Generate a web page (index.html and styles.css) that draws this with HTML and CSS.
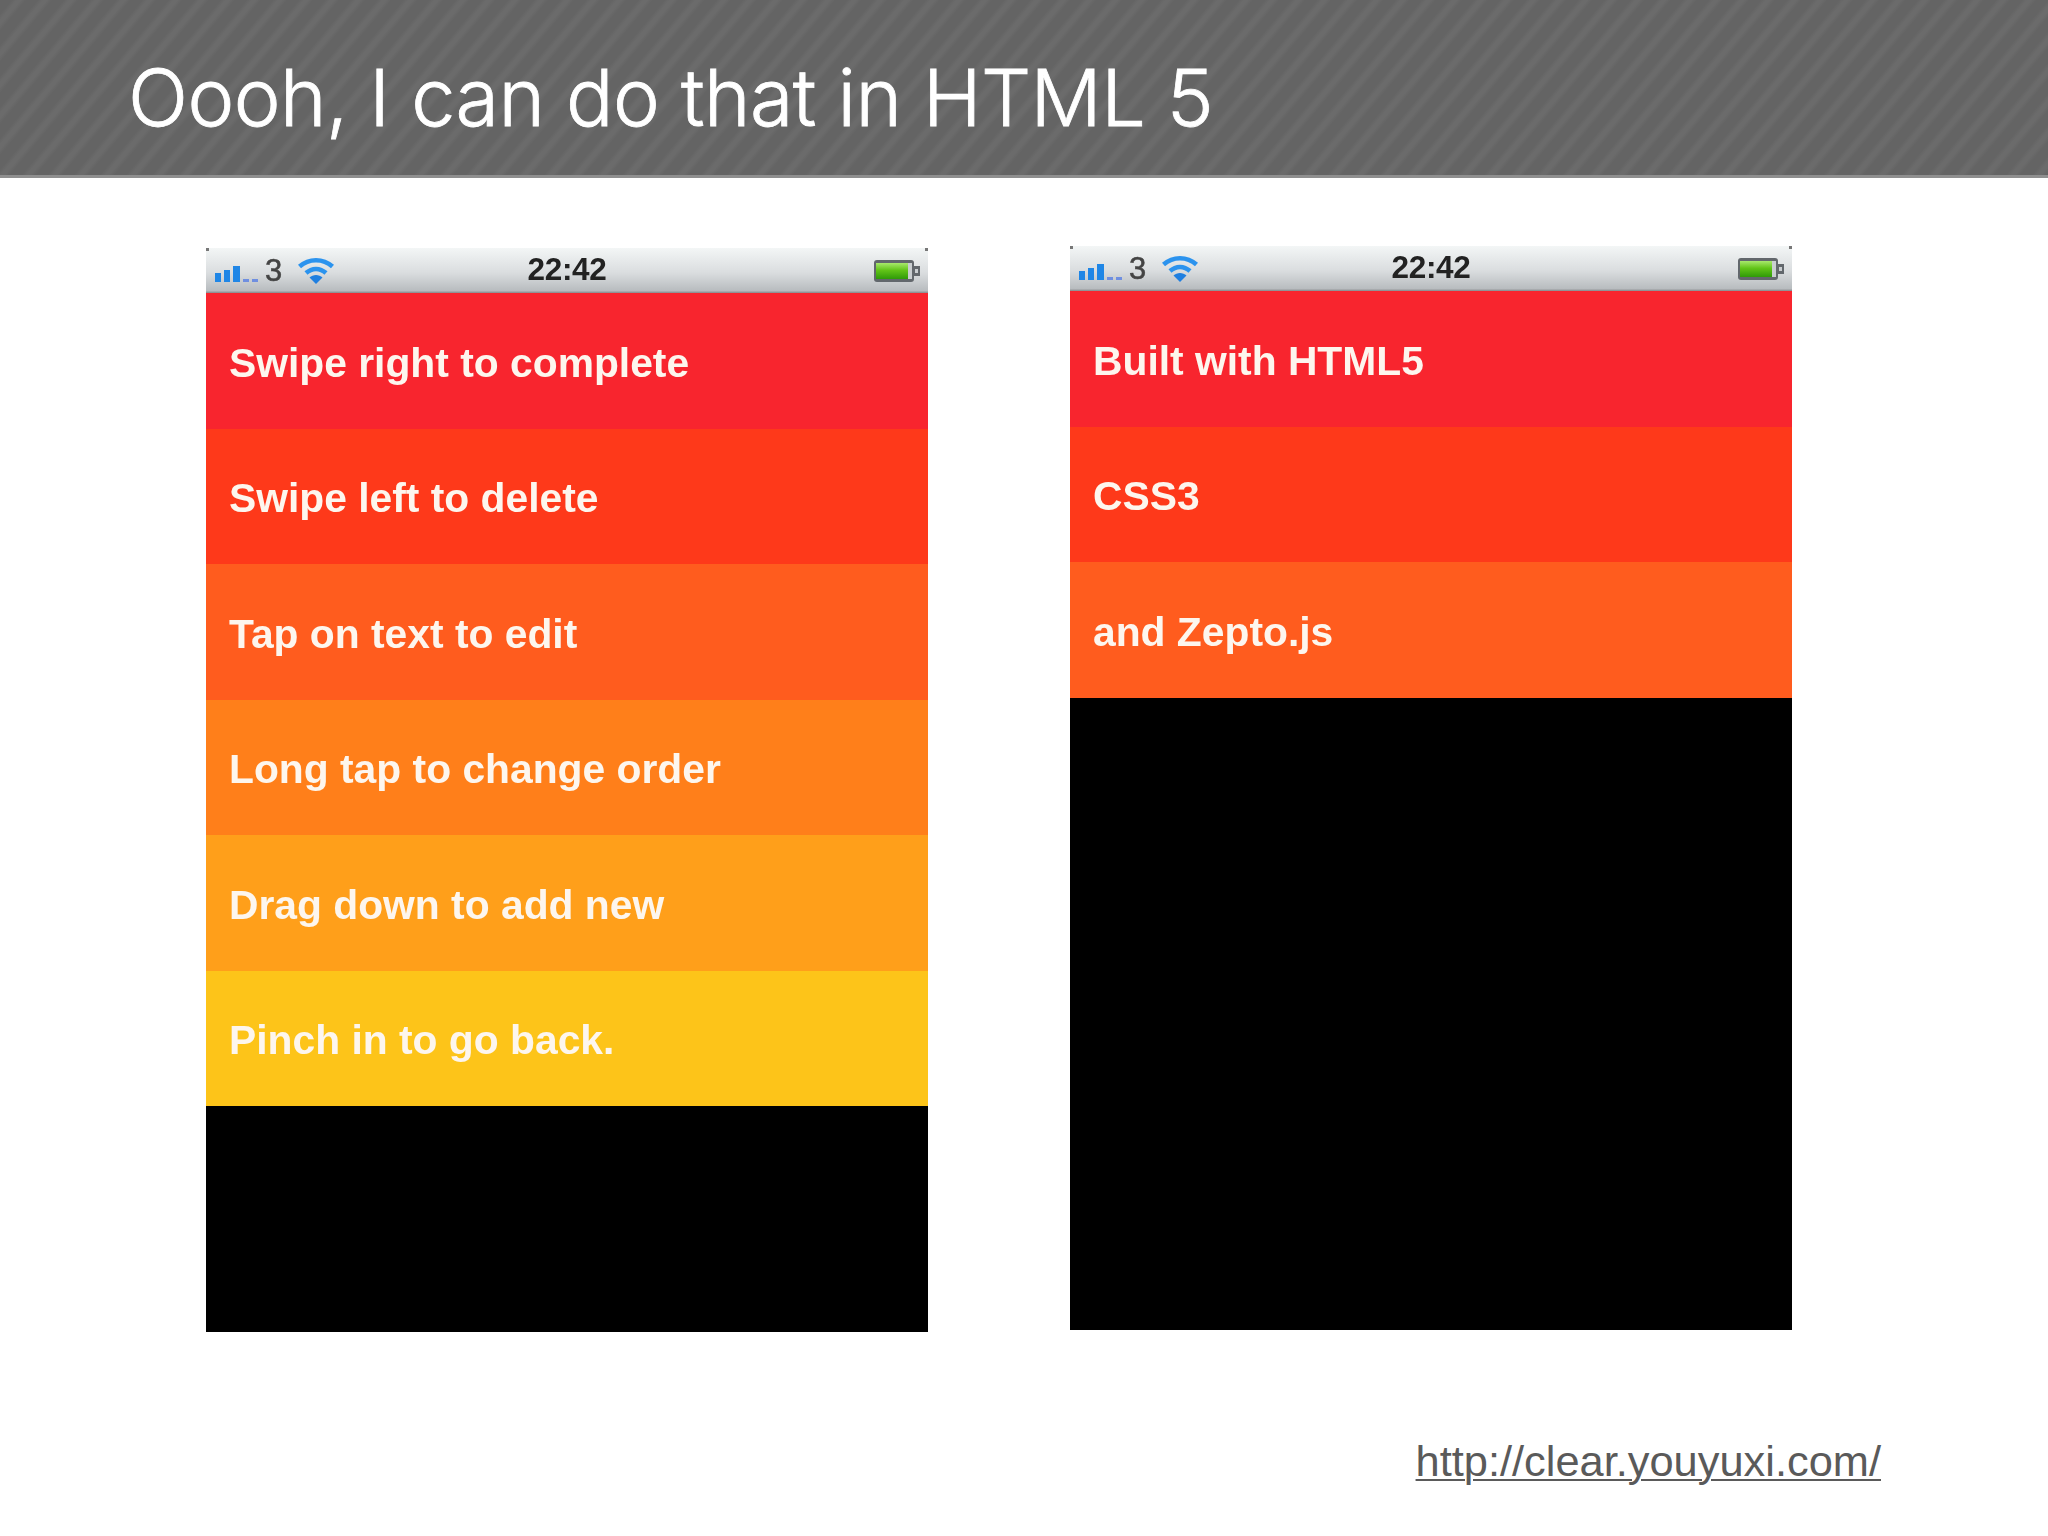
FILE: index.html
```html
<!DOCTYPE html>
<html lang="en">
<head>
<meta charset="utf-8">
<title>Oooh, I can do that in HTML 5</title>
<link rel="stylesheet" href="styles.css">
</head>
<body>
<svg class="defs" width="0" height="0" aria-hidden="true">
  <defs>
    <symbol id="signal" viewBox="0 0 44 18">
      <rect x="0" y="8" width="6" height="9" fill="#1f86e6"/>
      <rect x="9" y="5" width="6" height="12" fill="#1f86e6"/>
      <rect x="18" y="1" width="7" height="16" fill="#1f86e6"/>
      <rect x="28" y="14" width="6" height="3" fill="#6f8fe0"/>
      <rect x="37" y="14" width="6" height="3" fill="#6f8fe0"/>
    </symbol>
    <symbol id="wifi" viewBox="0 0 36 28">
      <path d="M1.5 9.5C11 1 25 1 34.5 9.500" fill="none" stroke="#2b93ee" stroke-width="4.500"/>
      <path d="M8 16C14 10.500 22 10.500 28 16" fill="none" stroke="#2b93ee" stroke-width="4.500"/>
      <path d="M18 27L11.500 20.500C15 17 21 17 24.500 20.500Z" fill="#1f7fe0"/>
    </symbol>
    <linearGradient id="charge" x1="0" y1="0" x2="0" y2="1">
      <stop offset="0" stop-color="#a8e86c"/>
      <stop offset="0.45" stop-color="#62c418"/>
      <stop offset="1" stop-color="#2f9a08"/>
    </linearGradient>
    <symbol id="battery" viewBox="0 0 48 24">
      <rect x="1" y="1" width="40" height="22" rx="3" fill="#62676c"/>
      <rect x="3" y="4" width="32" height="16" fill="url(#charge)"/>
      <rect x="35" y="4" width="4" height="16" fill="#c9cdd0"/>
      <rect x="41" y="7" width="6" height="10" fill="#62676c"/>
      <rect x="42" y="10" width="3" height="4" fill="#c9cdd0"/>
    </symbol>
  </defs>
</svg>

<header class="title-bar">
  <h1 class="title">Oooh, I can do that in HTML 5</h1>
</header>

<main class="phones">
  <section class="phone phone-low">
    <div class="status">
      <div class="status-left">
        <svg class="icon-signal"><use href="#signal"/></svg>
        <span class="carrier">3</span>
        <svg class="icon-wifi"><use href="#wifi"/></svg>
      </div>
      <div class="clock">22:42</div>
      <div class="status-right"><svg class="icon-battery"><use href="#battery"/></svg></div>
    </div>
    <ul class="list">
      <li class="item c1">Swipe right to complete</li>
      <li class="item c2">Swipe left to delete</li>
      <li class="item c3">Tap on text to edit</li>
      <li class="item c4">Long tap to change order</li>
      <li class="item c5">Drag down to add new</li>
      <li class="item c6">Pinch in to go back.</li>
    </ul>
  </section>

  <section class="phone">
    <div class="status">
      <div class="status-left">
        <svg class="icon-signal"><use href="#signal"/></svg>
        <span class="carrier">3</span>
        <svg class="icon-wifi"><use href="#wifi"/></svg>
      </div>
      <div class="clock">22:42</div>
      <div class="status-right"><svg class="icon-battery"><use href="#battery"/></svg></div>
    </div>
    <ul class="list">
      <li class="item c1">Built with HTML5</li>
      <li class="item c2">CSS3</li>
      <li class="item c3">and Zepto.js</li>
    </ul>
  </section>
</main>

<footer class="source">
  <a class="source-link" href="#">http://clear.youyuxi.com/</a>
</footer>
</body>
</html>
```

FILE: styles.css
```css
* { box-sizing: border-box; }

html, body {
  margin: 0;
  padding: 0;
  background: #fff;
}

body {
  width: 2048px;
  height: 1536px;
  overflow: hidden;
  font-family: "Liberation Sans", Arial, sans-serif;
}

.defs { position: absolute; }

.title-bar {
  height: 178px;
  padding: 20px 0 0 128px;
  display: flex;
  align-items: center;
  border-bottom: 3px solid #8f8f8f;
  background-color: #666;
  background-image: repeating-linear-gradient(130deg, #646464 0, #646464 9px, #6b6b6b 13px, #6b6b6b 16px, #646464 20px);
}

.title {
  margin: 0;
  font-family: Inter, "Liberation Sans", sans-serif;
  font-weight: 300;
  font-size: 79px;
  letter-spacing: -0.55px;
  -webkit-text-stroke: 0.8px #fff;
  line-height: 1;
  color: #fff;
  white-space: nowrap;
}

.phones {
  display: flex;
  align-items: flex-start;
  gap: 142px;
  padding: 68px 0 0 206px;
}

.phone {
  width: 722px;
  height: 1084px;
  background: #000;
}

.phone-low { margin-top: 2px; }

.status {
  position: relative;
  height: 45px;
  padding: 0 7px 0 9px;
  display: grid;
  grid-template-columns: 1fr auto 1fr;
  align-items: center;
  background: linear-gradient(#f3f6f6, #dadddf 55%, #b8bcbf 95%, #85888a);
  filter: blur(0.5px);
}

.status::before,
.status::after {
  content: "";
  position: absolute;
  top: 0;
  width: 3px;
  height: 3px;
  background: #777;
}
.status::before { left: 0; }
.status::after { right: 0; }

.status-left {
  display: flex;
  align-items: center;
}

.icon-signal {
  width: 44px;
  height: 18px;
  margin-top: 6px;
}

.carrier {
  margin-left: 6px;
  font-size: 31px;
  line-height: 1;
  color: #444;
  -webkit-text-stroke: 0.5px #444;
}

.icon-wifi {
  width: 36px;
  height: 28px;
  margin-left: 16px;
}

.clock {
  font-weight: 700;
  font-size: 31.5px;
  letter-spacing: -0.3px;
  line-height: 1;
  color: #222;
  transform: translate(-1px, -1px);
}

.status-right {
  display: flex;
  justify-content: flex-end;
}

.icon-battery {
  width: 48px;
  height: 24px;
}

.list {
  margin: 0;
  padding: 0;
  list-style: none;
}

.item {
  height: 135.5px;
  padding: 5px 0 0 23px;
  display: flex;
  align-items: center;
  font-weight: 700;
  font-size: 40.8px;
  color: #fdf6ee;
  filter: blur(0.6px);
}

.c1 { background: #f8252e; }
.c2 { background: #fe391a; }
.c3 { background: #ff5c1e; }
.c4 { background: #ff7f1a; }
.c5 { background: #ff9f1a; }
.c6 { background: #fdc419; }

.source {
  margin-top: 105px;
  padding-right: 167px;
  text-align: right;
}

.source-link {
  font-size: 43.4px;
  letter-spacing: 0;
  color: #5a5a5a;
  text-decoration: underline;
  text-decoration-thickness: 2px;
  text-underline-offset: 3px;
}
```
